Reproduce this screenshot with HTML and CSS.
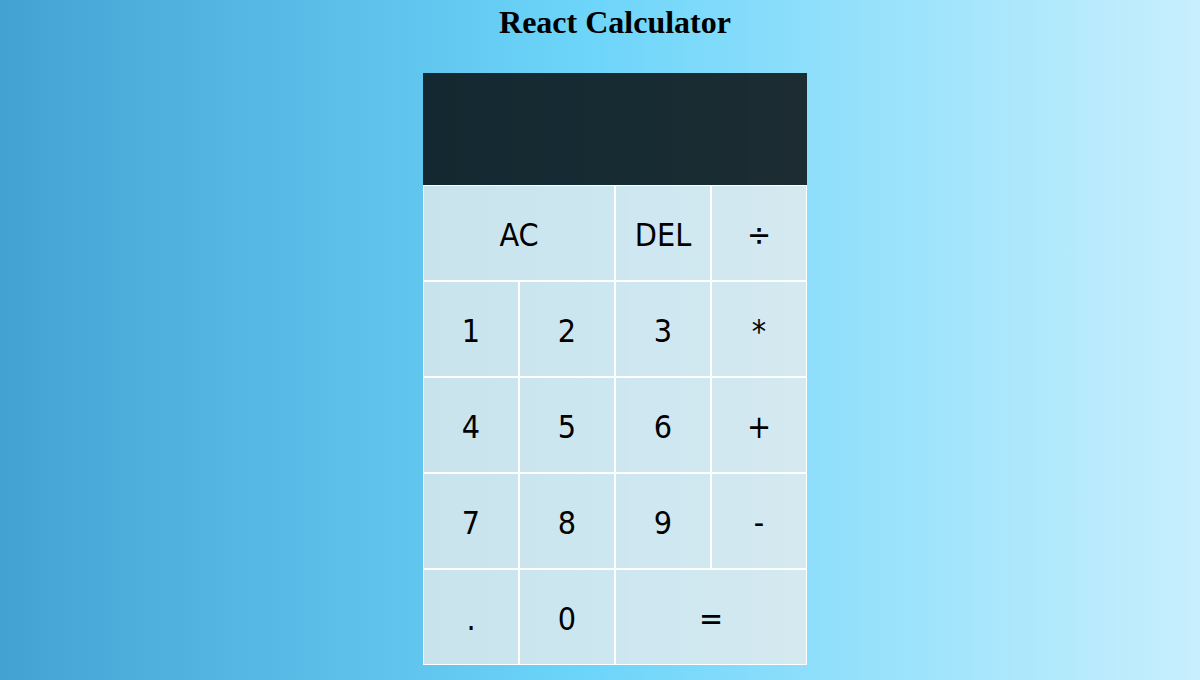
FILE: index.html
```html
<!DOCTYPE html>
<html lang="en">
<head>
<meta charset="utf-8">
<title>React Calculator</title>
<link rel="stylesheet" href="styles.css">
</head>
<body>
<div class="app">
  <h1 class="title">React Calculator</h1>
  <div class="calculator">
    <div class="output">
      <div class="previous"></div>
      <div class="current"></div>
    </div>
    <button class="key span-two">AC</button>
    <button class="key">DEL</button>
    <button class="key">÷</button>
    <button class="key">1</button>
    <button class="key">2</button>
    <button class="key">3</button>
    <button class="key">*</button>
    <button class="key">4</button>
    <button class="key">5</button>
    <button class="key">6</button>
    <button class="key">+</button>
    <button class="key">7</button>
    <button class="key">8</button>
    <button class="key">9</button>
    <button class="key">-</button>
    <button class="key">.</button>
    <button class="key">0</button>
    <button class="key span-two">=</button>
  </div>
</div>
</body>
</html>
```

FILE: styles.css
```css
*, *::before, *::after {
  box-sizing: border-box;
}

html, body {
  margin: 0;
  min-height: 100%;
}

body {
  min-height: 100vh;
  background: linear-gradient(to right, #2980b9 -32.7%, #6dd5fa 49.2%, #ffffff 131%);
  background-attachment: fixed;
}

.app {
  display: flex;
  flex-direction: column;
  align-items: center;
  padding-left: 30px;
}

.title {
  margin: 4px 0 0;
  font-family: "Liberation Serif", "Times New Roman", serif;
  font-weight: bold;
  font-size: 32px;
  line-height: 37px;
  color: #000;
}

.calculator {
  margin-top: 32px;
  display: grid;
  grid-template-columns: repeat(4, 96px);
  grid-template-rows: 112px repeat(5, 96px);
}

.output {
  grid-column: 1 / -1;
  background-color: rgba(0, 0, 0, 0.8);
  display: flex;
  flex-direction: column;
  align-items: flex-end;
  justify-content: space-around;
  padding: 10px;
  word-wrap: break-word;
  word-break: break-all;
}

.key {
  margin: 0;
  padding: 4px 0 0;
  font-family: "DejaVu Sans Condensed", "DejaVu Sans", sans-serif;
  font-stretch: condensed;
  font-size: 32px;
  color: #000;
  border: 1px solid #ffffff;
  outline: none;
  background-color: rgba(236, 236, 236, 0.75);
  cursor: pointer;
}

.span-two {
  grid-column: span 2;
}
```
